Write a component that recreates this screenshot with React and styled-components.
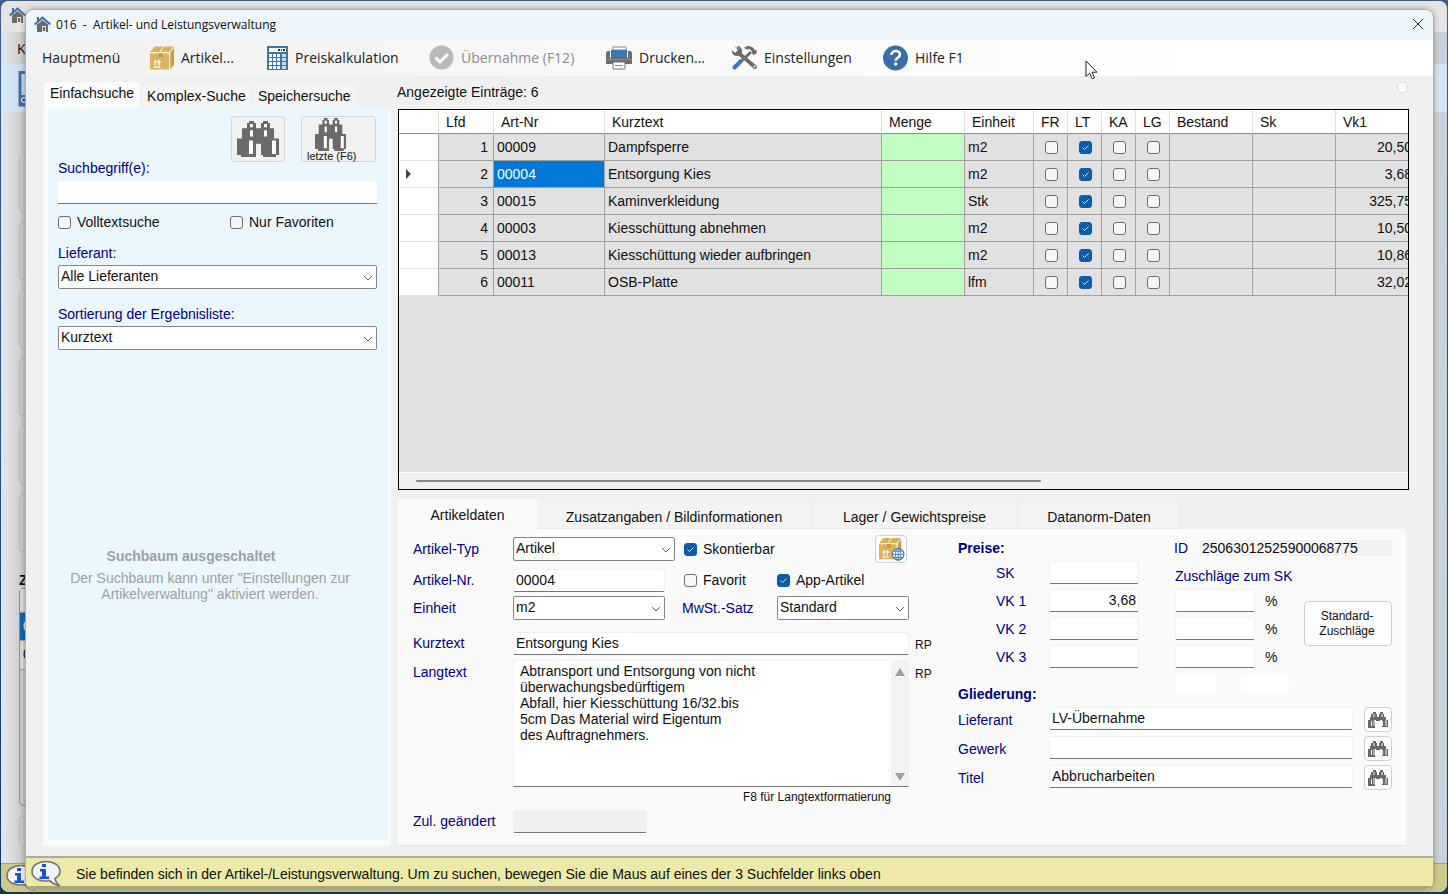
import React from "react";
import styled, { createGlobalStyle } from "styled-components";

const GlobalStyle = createGlobalStyle`
  * { box-sizing: border-box; }
  body {
    margin: 0;
    font-family: "Liberation Sans", Arial, sans-serif;
    font-size: 14px;
    color: #101010;
  }
  button, input, select, textarea { font: inherit; color: inherit; margin: 0; }
`;

const chevron = `url("data:image/svg+xml,%3Csvg xmlns='http://www.w3.org/2000/svg' width='10' height='6'%3E%3Cpath d='M1 1l4 4 4-4' fill='none' stroke='%23666'/%3E%3C/svg%3E")`;
const tick = `url("data:image/svg+xml,%3Csvg xmlns='http://www.w3.org/2000/svg' width='11' height='11'%3E%3Cpath d='M2.5 5.5l2 2 4-4' fill='none' stroke='%23d5e8fa'/%3E%3C/svg%3E")`;

const uiFont = `"Open Sans", "Noto Sans", sans-serif`;

/* ---------- windows ---------- */

const Desktop = styled.div`
  position: relative;
  min-height: 100vh;
  overflow: hidden;
  background: linear-gradient(#3d5f88, #1d4f7d 60%, #0f3a5e);
`;
const RearWindow = styled.div`
  position: absolute;
  inset: 1px 1px 2px 1px;
  display: flex;
  flex-direction: column;
  overflow: hidden;
  border-radius: 8px;
  background: linear-gradient(90deg, #dde6f0 0, #dde6f0 4px, #dedcdc 10px, #c4c4c4 25px, #cfcfcf 99%, #c6d3e0 100%);
`;
const RearTitle = styled.div`
  height: 31px;
  padding: 6px 0 0 8px;
  background: #e6e3e3;
`;
const RearMenu = styled.div`
  height: 32px;
  padding: 7px 0 0 16px;
  font-family: ${uiFont};
`;
const RearTool = styled.div`
  height: 48px;
  padding: 7px 0 0 17px;
  background: linear-gradient(90deg, #dcebf8, #c7d6e4 25px, #d5e4f2);
`;
const RearBody = styled.div`
  flex: 1;
  display: flex;
  flex-direction: column;
  justify-content: flex-end;
  width: 80px;
  padding: 0 0 16px 18px;
  font-weight: bold;
`;
const RearGroup = styled.div`
  height: ${(p) => p.$h}px;
  margin-bottom: ${(p) => p.$gap || 10}px;
  border: 1px solid #b5b5b5;
  border-radius: 4px;
`;
const RearList = styled.div`
  height: 218px;
  margin: 0 0 10px;
  border: 1px solid #8d8d8d;
  font-weight: normal;
`;
const RearItem = styled.div`
  height: ${(p) => p.$h}px;
  padding: 5px 0 0 3px;
  border-bottom: 1px solid #999;
  color: ${(p) => (p.$active ? "#fff" : "#111")};
  background: ${(p) => (p.$active ? "#0b67b5" : "#dadada")};
`;
const RearStatus = styled.div`
  height: 29px;
  padding-left: 5px;
  border-top: 1px solid #a39f86;
  background: #cfca8c;
`;

const Window = styled.div`
  position: relative;
  display: flex;
  flex-direction: column;
  min-height: calc(100vh - 15px);
  margin: 10px 15px 5px 26px;
  overflow: hidden;
  border-radius: 8px;
  background: #f0f0f0;
  box-shadow: 0 0 0 1px #a9adb3, 0 0 6px rgba(0, 0, 0, 0.4);
`;
const TitleBar = styled.header`
  display: flex;
  align-items: center;
  height: 30px;
  padding: 0 8px 2px;
  background: #eef5fb;
  font-family: ${uiFont};
  font-size: 12px;
  white-space: pre;
`;
const Title = styled.h1`
  flex: 1;
  margin: 0 0 0 5px;
  font-size: 12px;
  font-weight: normal;
`;
const CloseButton = styled.button`
  display: flex;
  padding: 1px;
  border: none;
  background: none;
`;

/* ---------- toolbar ---------- */

const Toolbar = styled.nav`
  display: grid;
  grid-template-columns: 107px 117px 163px 177px 125px 152px auto;
  justify-content: start;
  align-items: center;
  height: 36px;
  padding: 0 0 1px 16px;
  background: linear-gradient(90deg, #f1f1f1, #f8f8f8 40%, #fff 85%);
`;
const ToolButton = styled.button`
  display: flex;
  align-items: center;
  gap: 6px;
  padding: 0;
  border: none;
  background: none;
  color: ${(p) => (p.disabled ? "#8c8c8c" : "#222")};
  font-family: ${uiFont};
  font-size: 14px;
  white-space: nowrap;
`;

/* ---------- layout ---------- */

const Main = styled.main`
  flex: 1;
  display: flex;
  gap: 6px;
  padding: 0 24px 10px 17px;
`;
const Sidebar = styled.aside`
  flex: none;
  display: flex;
  flex-direction: column;
  width: 348px;
  padding-top: 6px;
`;
const SearchTabs = styled.div`
  display: flex;
  align-items: flex-end;
  gap: 2px;
  height: 26px;
  padding-left: 1px;
`;
const SearchTab = styled.button`
  height: ${(p) => (p.$active ? 26 : 22)}px;
  padding: ${(p) => (p.$active ? "0 6px 4px" : "0 5px 3px")};
  border: none;
  background: ${(p) => (p.$active ? "#fbfbfb" : "#f4f4f4")};
`;
const SearchPanel = styled.section`
  flex: 1;
  display: flex;
  flex-direction: column;
  padding: 8px 11px 0 10px;
  border: solid #f8fafc;
  border-width: 0 3px 6px 5px;
  background: #eaf7ff;
`;
const SearchButtons = styled.div`
  display: flex;
  justify-content: flex-end;
  gap: 16px;
  height: 44px;
  padding-right: 1px;
`;
const SearchButton = styled.button`
  display: flex;
  flex-direction: column;
  align-items: ${(p) => (p.$wide ? "flex-start" : "center")};
  justify-content: center;
  width: ${(p) => (p.$wide ? 75 : 54)}px;
  height: 46px;
  padding: 0 5px;
  border: 1px solid #d0d6da;
  border-radius: 3px;
  background: #f1f1f1;
  font-size: 11px;
  line-height: 10px;
  svg { margin-left: ${(p) => (p.$wide ? 8 : 0)}px; }
`;
const Label = styled.label`
  color: #000080;
  line-height: 16px;
  white-space: nowrap;
`;
const TopLabel = styled(Label)`
  padding-top: 4px;
`;
const TermInput = styled.input`
  height: 23px;
  margin-top: 5px;
  padding: 0 2px;
  border: none;
  border-bottom: 1px solid #767676;
  outline: none;
  background: #fff;
`;
const CheckRow = styled.div`
  display: grid;
  grid-template-columns: 172px 1fr;
  align-items: center;
  height: 16px;
  margin: 10px 0 15px;
`;
const Field = styled.div`
  display: flex;
  flex-direction: column;
  gap: 4px;
  margin-bottom: 17px;
`;
const Notice = styled.div`
  margin: 181px 15px 0 0;
  color: #9ba1a5;
  line-height: 16px;
  text-align: center;
  p { margin: 6px 0 0; }
  strong { display: block; padding-right: 38px; }
`;

const Content = styled.div`
  flex: 1;
  min-width: 0;
  display: flex;
  flex-direction: column;
`;
const ListHeader = styled.div`
  display: flex;
  justify-content: space-between;
  height: 33px;
  padding: 8px 1px 0 0;
  line-height: 16px;
`;
const Dot = styled.span`
  width: 11px;
  height: 11px;
  margin: -2px 0 0;
  border: 1px solid #ddd;
  border-radius: 4px;
  background: #fafafa;
`;

/* ---------- controls ---------- */

const Input = styled.input`
  flex: ${(p) => (p.$w ? "none" : 1)};
  min-width: 0;
  width: ${(p) => (p.$w ? p.$w + "px" : "auto")};
  height: 23px;
  padding: 0 2px 1px;
  border: 1px solid #f0f0f0;
  border-bottom-color: #767676;
  border-radius: 2px;
  outline: none;
  background: ${(p) => (p.readOnly ? "#f0f0f0" : "#fff")};
  text-align: ${(p) => (p.$right ? "right" : "left")};
`;
const Select = styled.select`
  width: ${(p) => (p.$w ? p.$w + "px" : "100%")};
  height: 24px;
  padding: 0 20px 2px 2px;
  border: 1px solid #858585;
  border-radius: 2px;
  appearance: none;
  background: #fff ${chevron} no-repeat right 3px top 9px;
`;
const Check = styled.input.attrs({ type: "checkbox" })`
  flex: none;
  display: block;
  width: 13px;
  height: 13px;
  appearance: none;
  border: 1px solid #6e6e6e;
  border-radius: 3px;
  background: #f6f6f6;
  &:checked {
    border-color: #0a5cad;
    background: #0a5cad ${tick} center no-repeat;
  }
`;
const CheckLabel = styled.label`
  display: flex;
  align-items: center;
  gap: 6px;
  line-height: 16px;
  white-space: nowrap;
`;
const IconButton = styled.button`
  flex: none;
  display: flex;
  align-items: center;
  justify-content: center;
  width: ${(p) => p.$w}px;
  height: ${(p) => p.$h}px;
  padding: 0;
  border: 1px solid #d0d0d0;
  border-radius: 4px;
  background: #fdfdfd;
`;

/* ---------- article table ---------- */

const GridBox = styled.div`
  flex: 1;
  display: flex;
  flex-direction: column;
  min-height: 240px;
  margin-left: 1px;
  overflow: hidden;
  border: 1px solid #000;
  background: #e1e1e1;
`;
const GridBody = styled.div`
  flex: 1;
  overflow: hidden;
`;
const Table = styled.table`
  width: 1020px;
  min-width: 100%;
  table-layout: fixed;
  border-spacing: 0;
`;
const Th = styled.th`
  height: 24px;
  padding: 0 0 0 7px;
  border-right: 1px solid #e0e0e0;
  border-bottom: 1px solid #8c8c8c;
  background: #fff;
  font-weight: normal;
  text-align: left;
  white-space: nowrap;
`;
const Td = styled.td`
  height: 27px;
  padding: 0 ${(p) => (p.$flag ? 2 : p.$money ? 6 : 5)}px 0 3px;
  border-right: 1px solid #a0a0a0;
  border-bottom: 1px solid ${(p) => (p.$head ? "#e0e0e0" : "#a0a0a0")};
  background: ${(p) =>
    p.$head ? "#fff" : p.$selected ? "#0078d7" : p.$amount ? "#c0ffc0" : "#e1e1e1"};
  color: ${(p) => (p.$selected ? "#fff" : "inherit")};
  text-align: ${(p) => (p.$right ? "right" : "left")};
  white-space: nowrap;
  input { margin: 0 auto; }
  svg { display: block; }
`;
const ScrollTrack = styled.div`
  height: 17px;
  padding: 7px 0 0 17px;
  border-top: 1px solid #fff;
  background: #f0f0f0;
`;
const ScrollThumb = styled.div`
  width: 63%;
  height: 2px;
  border-radius: 1px;
  background: #868686;
`;

/* ---------- detail form ---------- */

const DetailTabs = styled.div`
  display: flex;
  align-items: flex-end;
  height: 30px;
  margin: 9px 0 0 1px;
`;
const DetailTab = styled.button`
  width: ${(p) => p.$w}px;
  height: ${(p) => (p.$active ? 30 : 27)}px;
  padding: ${(p) => (p.$active ? 2 : 4)}px 0 0;
  border: solid #e6e6e6;
  border-width: ${(p) => (p.$active ? "0" : "0 1px 1px 0")};
  background: ${(p) => (p.$active ? "#fafafa" : "#f3f3f3")};
  white-space: nowrap;
`;
const DetailPanel = styled.section`
  display: flex;
  margin: 0 3px 0 1px;
  padding: 6px 14px 12px 15px;
  border-bottom: 1px solid #e8e8e8;
  background: #fafafa;
`;
const ArticleForm = styled.div`
  flex: none;
  width: 545px;
`;
const Row = styled.div`
  display: grid;
  grid-template-columns: ${(p) => p.$cols || "100px auto 1fr"};
  align-items: ${(p) => p.$align || "center"};
  min-height: ${(p) => p.$h || 24}px;
  margin-bottom: ${(p) => p.$gap}px;
`;
const LongText = styled.div`
  display: flex;
  width: 396px;
  height: 127px;
  border: 1px solid #f0f0f0;
  border-bottom-color: #767676;
  background: #fff;
`;
const TextArea = styled.textarea`
  flex: 1;
  padding: 2px 6px;
  border: none;
  outline: none;
  resize: none;
  overflow: hidden;
  background: transparent;
  line-height: 16px;
`;
const ScrollArrows = styled.div`
  display: flex;
  flex-direction: column;
  justify-content: space-between;
  align-items: center;
  width: 17px;
  padding: 7px 0 5px;
  background: #f3f3f3;
`;
const Small = styled.span`
  padding: ${(p) => p.$p || "4px 0 0 6px"};
  font-size: 12px;
  line-height: 16px;
`;
const Percent = styled.span`
  padding-left: 6px;
  line-height: 16px;
`;
const Hint = styled.div`
  width: 478px;
  height: 19px;
  font-size: 12px;
  line-height: 14px;
  text-align: right;
`;
const PriceForm = styled.div`
  flex: 1;
  min-width: 434px;
`;
const Heading = styled.h2`
  margin: 0;
  color: #000080;
  font-size: 14px;
  line-height: 16px;
`;
const Output = styled.output`
  padding-left: 2px;
  background: #f2f2f2;
  line-height: 16px;
`;
const Prices = styled.div`
  display: flex;
  height: 115px;
`;
const PriceGrid = styled.div`
  display: grid;
  grid-template-columns: ${(p) => p.$cols};
  grid-auto-rows: 23px;
  align-content: start;
  align-items: center;
  gap: 5px 0;
  margin-right: ${(p) => p.$mr}px;
`;
const PriceLabel = styled(Label)`
  padding-left: 38px;
`;
const SurchargeTitle = styled(Label)`
  grid-column: 1 / -1;
  padding-top: 7px;
`;
const SurchargeButton = styled.button`
  width: 88px;
  height: 45px;
  margin: 40px 0 0 auto;
  padding: 0 2px 0 0;
  border: 1px solid #cfcfcf;
  border-radius: 4px;
  background: #fdfdfd;
  font-size: 12px;
  line-height: 15px;
`;
const GroupRow = styled.div`
  display: grid;
  grid-template-columns: 218px 65px 1fr;
  height: 26px;
  margin-bottom: 5px;
  h2 { align-self: end; }
`;
const Blank = styled.span`
  width: ${(p) => p.$w}px;
  height: 16px;
  background: #fff;
`;
const GroupAction = styled.div`
  display: flex;
  justify-content: flex-end;
`;
const StatusBar = styled.footer`
  display: flex;
  align-items: center;
  gap: 14px;
  height: 33px;
  padding: 3px 5px 0;
  border-top: 2px solid #ababa5;
  border-bottom: 3px solid #aaa577;
  background: #ece9a9;
`;
const Cursor = styled.svg`
  position: absolute;
  left: 1059px;
  top: 50px;
`;

/* ---------- icons ---------- */

const HouseIcon = () => (
  <svg width="17" height="16" viewBox="0 0 17 16">
    <path d="M3 8.500L8.500 4 14 8.500V16H3z" fill="#6b6b6b" />
    <path d="M8 10h4v6H8z" fill="#e8edf2" />
    <path d="M8.800 11h2.400v4H8.800z" fill="#6b6b6b" />
    <path d="M.7 8.500L8.500 1.500 16.300 8.500" fill="none" stroke="#3b6ea5" strokeWidth="2" />
    <path d="M3 1h2v4L3 6.500z" fill="#3b6ea5" />
  </svg>
);

const CrateShape = () => (
  <g>
    <path d="M1 7l5-6h20l-5 6z" fill="#d9b15a" />
    <path d="M1 8h20v17H1z" fill="#dcb35c" />
    <path d="M22 7.500l4-5.500v18l-4 5z" fill="#c89c40" />
    <path d="M1 7.500h20.500L26 1.500M21.500 7.500V25M11 7.500L15 1" fill="none" stroke="#fff6dc" />
    <path d="M10 8h4v5l-2-1.500-2 1.500z" fill="#c2953a" />
    <path d="M6.500 21v-5M10.500 21v-5M5 17.500l1.500-2 1.500 2M9 17.500l1.500-2 1.500 2M5 22.500h7" fill="none" stroke="#fff" strokeWidth="1.200" />
  </g>
);

const BoxIcon = () => (
  <svg width="26" height="26" viewBox="0 0 27 26">
    <CrateShape />
  </svg>
);

const BoxGlobeIcon = () => (
  <svg width="27" height="24" viewBox="0 0 30 27">
    <CrateShape />
    <circle cx="22.500" cy="19.500" r="6.500" fill="#fff" stroke="#3a74b8" strokeWidth="1.200" />
    <path d="M16 19.500h13M22.500 13v13M17.500 16h10M17.500 23h10" stroke="#3a74b8" fill="none" />
    <ellipse cx="22.500" cy="19.500" rx="3" ry="6.500" fill="none" stroke="#3a74b8" />
  </svg>
);

const CalcIcon = () => (
  <svg width="23" height="24" viewBox="0 0 23 24">
    <rect x="1" y="0" width="21" height="24" fill="#3f75ad" />
    <rect x="3" y="2" width="17" height="4" fill="#fff" />
    <path d="M12 3h2v2h-2zM15 3h1v2h-1zM17 3h2v2h-2z" fill="#333" />
    {[8, 12, 16, 20].map((y) =>
      [3, 7, 11, 16].map((x) => (
        <rect key={x + "-" + y} x={x} y={y} width={x === 16 ? 4 : 3} height="3" fill={x === 16 ? "#c9dcef" : "#fff"} />
      ))
    )}
  </svg>
);

const CheckCircleIcon = () => (
  <svg width="26" height="26" viewBox="0 0 26 26">
    <circle cx="12.500" cy="12.500" r="12" fill="#b9b9b9" />
    <path d="M6.500 12.500l4.500 4.500L19 9" fill="none" stroke="#fff" strokeWidth="3" />
  </svg>
);

const PrinterIcon = () => (
  <svg width="27" height="24" viewBox="0 0 27 24">
    <path d="M1 5h3v7h18V5h3l1 2v11H0V7z" fill="#6d6d6d" />
    <path d="M7 1h13v3H7z" fill="#fff" stroke="#888" />
    <path d="M5 4h16v8H5z" fill="#3b76b8" />
    <path d="M0 13.500h26" stroke="#8b8b8b" />
    <path d="M7 16h12v7H7z" fill="#fff" stroke="#777" />
    <path d="M9 19.500h8" stroke="#888" />
  </svg>
);

const ToolsIcon = () => (
  <svg width="27" height="25" viewBox="0 0 27 25">
    <path d="M7 7.500L24 22" stroke="#6c6c6c" strokeWidth="4" strokeLinecap="round" />
    <path d="M3 1l4 4-1.500 3L2 6.500.8 4.500C.5 7.500 2 11 6 11c3 0 5.500-2.500 5-6C10.500 2.500 8 .5 5.500 1l2.500 3z" fill="#6c6c6c" />
    <circle cx="23.500" cy="21.500" r="1" fill="#fff" />
    <path d="M20 7L11 15.500" stroke="#6c6c6c" strokeWidth="3" />
    <path d="M13 3c3-3 7-2.500 9.500 0l1 2 2.500.5-.5 3-3 1.500-1.500-1.500v-2L18.500 4 16 4.500z" fill="#6c6c6c" />
    <path d="M10 16L3.500 22.500" stroke="#3b76b8" strokeWidth="4" strokeLinecap="round" />
  </svg>
);

const HelpIcon = () => (
  <svg width="26" height="26" viewBox="0 0 26 26">
    <circle cx="12.500" cy="13" r="12.500" fill="#356ea8" />
    <path d="M8.500 10c0-5.500 8.500-5 8.500-.5 0 3-4.300 3-4.300 6.300" fill="none" stroke="#fff" strokeWidth="2.600" />
    <circle cx="12.700" cy="19" r="1.700" fill="#fff" />
  </svg>
);

const BinocularsIcon = ({ width, height }) => (
  <svg width={width} height={height} viewBox="0 0 42 35" preserveAspectRatio="none">
    <path
      d="M12 0h5v2h2v5h5V2h2V0h5v2h2v5h4v10h5v16h-3v2H26v-2h-2V22h-5v13H4v-2H0V17h5V7h5V2h2z"
      fill="#6a6a6a"
    />
    <path d="M13 3h3v3h-3zM27 3h3v3h-3zM13 9h3v6h-3zM27 9h3v6h-3zM12 19h4v13h-4zM35 19h4v13h-4z" fill="#fff" />
  </svg>
);

/* narrow barrels, legible at 20px */
const SmallBinocularsIcon = () => (
  <svg width="20" height="17" viewBox="0 0 20 17">
    <path d="M5 1h3v2h1v3h2V3h1V1h3v2h1v3h2v3h2v7h-6V9H7v8H0V9h2V6h1V3h2z" fill="#686868" />
    <path d="M8 6h4v4H8z" fill="#686868" />
    <path d="M3 10h1v5H3zM5.500 9h1v6h-1zM14 10h1v5h-1zM17.500 9h1v6h-1zM5.500 3h1v3h-1zM13.500 3h1v3h-1z" fill="#f4f4f4" />
  </svg>
);

const InfoIcon = () => (
  <svg width="31" height="28" viewBox="0 0 31 28">
    <path d="M15 1.500C7 1.500 1 5.500 1 11.500s6 9.500 13 9.500c1.500 0 3-.2 4.500-.6C21 23 25 25 29 26c-3-2-4.500-4.500-5-7.500 3-1.700 5-4 5-7C29 5.500 23 1.500 15 1.500z" fill="#f2f2fa" stroke="#77756f" strokeWidth="1.600" />
    <path d="M11 4h4v3h-4zM9 9h6v7.500h3V19H8.500v-2.500H11v-5H9z" fill="#1553d8" />
  </svg>
);

/* ---------- data ---------- */

const columns = [
  ["", 40], ["Lfd", 55], ["Art-Nr", 111], ["Kurztext", 277], ["Menge", 83],
  ["Einheit", 69], ["FR", 34], ["LT", 34], ["KA", 34], ["LG", 34],
  ["Bestand", 83], ["Sk", 83], ["Vk1", 83],
];

const articles = [
  { nr: "00009", text: "Dampfsperre", unit: "m2", vk: "20,50" },
  { nr: "00004", text: "Entsorgung Kies", unit: "m2", vk: "3,68" },
  { nr: "00015", text: "Kaminverkleidung", unit: "Stk", vk: "325,75" },
  { nr: "00003", text: "Kiesschüttung abnehmen", unit: "m2", vk: "10,50" },
  { nr: "00013", text: "Kiesschüttung wieder aufbringen", unit: "m2", vk: "10,86" },
  { nr: "00011", text: "OSB-Platte", unit: "lfm", vk: "32,02" },
];

const longText = `Abtransport und Entsorgung von nicht
überwachungsbedürftigem
Abfall, hier Kiesschüttung 16/32.bis
5cm Das Material wird Eigentum
des Auftragnehmers.`;

const groups = [
  ["Lieferant", "LV-Übernahme"],
  ["Gewerk", ""],
  ["Titel", "Abbrucharbeiten"],
];

/* ---------- parts ---------- */

function Background() {
  return (
    <RearWindow aria-hidden="true">
      <RearTitle><HouseIcon /></RearTitle>
      <RearMenu>K</RearMenu>
      <RearTool>
        <svg width="20" height="36" viewBox="0 0 20 36">
          <path d="M20 1.500H2V34h18" fill="none" stroke="#3a6ea5" strokeWidth="3" />
          <path d="M2 24h18v11H2z" fill="#3a6ea5" />
          <circle cx="6" cy="29" r="2.500" fill="none" stroke="#fff" />
        </svg>
      </RearTool>
      <RearBody>
        <RearGroup $h={58} />
        <RearGroup $h={58} />
        <RearGroup $h={58} />
        <RearGroup $h={58} />
        <RearGroup $h={58} />
        <RearGroup $h={58} $gap={20} />
        <div>Z</div>
        <RearGroup as={RearList}>
          <RearItem $h={24} />
          <RearItem $h={28} $active>0</RearItem>
          <RearItem $h={29}>0</RearItem>
        </RearGroup>
        <RearGroup $h={30} $gap={1} />
      </RearBody>
      <RearStatus><InfoIcon /></RearStatus>
    </RearWindow>
  );
}

function Search() {
  return (
    <Sidebar>
      <SearchTabs>
        <SearchTab $active>Einfachsuche</SearchTab>
        <SearchTab>Komplex-Suche</SearchTab>
        <SearchTab>Speichersuche</SearchTab>
      </SearchTabs>
      <SearchPanel>
        <SearchButtons>
          <SearchButton aria-label="Suchen"><BinocularsIcon width={42} height={36} /></SearchButton>
          <SearchButton $wide>
            <BinocularsIcon width={31} height={33} />
            letzte (F6)
          </SearchButton>
        </SearchButtons>
        <Label htmlFor="term">Suchbegriff(e):</Label>
        <TermInput id="term" />
        <CheckRow>
          <CheckLabel><Check />Volltextsuche</CheckLabel>
          <CheckLabel><Check />Nur Favoriten</CheckLabel>
        </CheckRow>
        <Field>
          <Label htmlFor="supplier">Lieferant:</Label>
          <Select id="supplier"><option>Alle Lieferanten</option></Select>
        </Field>
        <Field>
          <Label htmlFor="sort">Sortierung der Ergebnisliste:</Label>
          <Select id="sort"><option>Kurztext</option></Select>
        </Field>
        <Notice>
          <strong>Suchbaum ausgeschaltet</strong>
          <p>
            Der Suchbaum kann unter "Einstellungen zur<br />
            Artikelverwaltung" aktiviert werden.
          </p>
        </Notice>
      </SearchPanel>
    </Sidebar>
  );
}

function ArticleTable() {
  return (
    <GridBox>
      <GridBody>
        <Table>
          <colgroup>
            {columns.map(([name, width]) => <col key={name} width={width} />)}
          </colgroup>
          <thead>
            <tr>{columns.map(([name]) => <Th key={name}>{name}</Th>)}</tr>
          </thead>
          <tbody>
            {articles.map((a, i) => (
              <tr key={a.nr}>
                <Td $head>
                  {i === 1 && <svg width="10" height="10"><path d="M4 0l5 5-5 5z" fill="#444" /></svg>}
                </Td>
                <Td $right>{i + 1}</Td>
                <Td $selected={i === 1}>{a.nr}</Td>
                <Td>{a.text}</Td>
                <Td $amount />
                <Td>{a.unit}</Td>
                {["FR", "LT", "KA", "LG"].map((flag) => (
                  <Td key={flag} $flag><Check aria-label={flag} defaultChecked={flag === "LT"} /></Td>
                ))}
                <Td />
                <Td />
                <Td $right $money>{a.vk}</Td>
              </tr>
            ))}
          </tbody>
        </Table>
      </GridBody>
      <ScrollTrack><ScrollThumb /></ScrollTrack>
    </GridBox>
  );
}

function ArticleData() {
  return (
    <ArticleForm>
      <Row $h={28} $gap={5} $cols="100px 171px 191px auto">
        <Label htmlFor="type">Artikel-Typ</Label>
        <Select id="type" $w={162}><option>Artikel</option></Select>
        <CheckLabel><Check defaultChecked />Skontierbar</CheckLabel>
        <IconButton $w={32} $h={28} aria-label="Webshop"><BoxGlobeIcon /></IconButton>
      </Row>
      <Row $gap={4} $cols="100px 171px 93px auto">
        <Label htmlFor="number">Artikel-Nr.</Label>
        <Input id="number" $w={152} defaultValue="00004" />
        <CheckLabel><Check />Favorit</CheckLabel>
        <CheckLabel><Check defaultChecked />App-Artikel</CheckLabel>
      </Row>
      <Row $gap={11} $cols="100px 169px 95px auto">
        <Label htmlFor="unit">Einheit</Label>
        <Select id="unit" $w={152}><option>m2</option></Select>
        <Label htmlFor="vat">MwSt.-Satz</Label>
        <Select id="vat" $w={132}><option>Standard</option></Select>
      </Row>
      <Row $gap={5}>
        <Label htmlFor="short">Kurztext</Label>
        <Input id="short" $w={396} defaultValue="Entsorgung Kies" />
        <Small>RP</Small>
      </Row>
      <Row $gap={3} $align="start">
        <TopLabel htmlFor="long">Langtext</TopLabel>
        <LongText>
          <TextArea id="long" defaultValue={longText} />
          <ScrollArrows>
            <svg width="10" height="8"><path d="M5 0l5 8H0z" fill="#a0a0a0" /></svg>
            <svg width="10" height="8"><path d="M5 8l5-8H0z" fill="#a0a0a0" /></svg>
          </ScrollArrows>
        </LongText>
        <Small $p="6px 0 0 6px">RP</Small>
      </Row>
      <Hint>F8 für Langtextformatierung</Hint>
      <Row $gap={0}>
        <Label htmlFor="changed">Zul. geändert</Label>
        <Input id="changed" $w={134} readOnly />
      </Row>
    </ArticleForm>
  );
}

function PriceData() {
  return (
    <PriceForm>
      <Row $h={26} $gap={0} $cols="216px 26px 1fr">
        <Heading>Preise:</Heading>
        <Label htmlFor="id">ID</Label>
        <Output id="id">25063012525900068775</Output>
      </Row>
      <Prices>
        <PriceGrid $cols="91px 90px" $mr={36}>
          {["SK", "VK 1", "VK 2", "VK 3"].map((name) => (
            <React.Fragment key={name}>
              <PriceLabel htmlFor={name}>{name}</PriceLabel>
              <Input id={name} $w={90} $right defaultValue={name === "VK 1" ? "3,68" : ""} />
            </React.Fragment>
          ))}
        </PriceGrid>
        <PriceGrid $cols="84px auto" $mr={0}>
          <SurchargeTitle as="span">Zuschläge zum SK</SurchargeTitle>
          {[1, 2, 3].map((n) => (
            <React.Fragment key={n}>
              <Input $w={80} aria-label={"Zuschlag VK " + n} />
              <Percent>%</Percent>
            </React.Fragment>
          ))}
        </PriceGrid>
        <SurchargeButton>Standard-<br />Zuschläge</SurchargeButton>
      </Prices>
      <GroupRow>
        <Heading>Gliederung:</Heading>
        <Blank $w={40} />
        <Blank $w={48} />
      </GroupRow>
      {groups.map(([name, value]) => (
        <Row key={name} $gap={4} $h={25} $align="end" $cols="91px 1fr 39px">
          <GroupLabel htmlFor={"g" + name}>{name}</GroupLabel>
          <GroupInput id={"g" + name} defaultValue={value} />
          <GroupAction>
            <IconButton $w={28} $h={25} aria-label={name + " suchen"}>
              <SmallBinocularsIcon />
            </IconButton>
          </GroupAction>
        </Row>
      ))}
    </PriceForm>
  );
}

const GroupLabel = styled(Label)`
  align-self: center;
`;
const GroupInput = styled(Input)`
  align-self: start;
`;

export default function App() {
  return (
    <Desktop>
      <GlobalStyle />
      <Background />
      <Window>
        <TitleBar>
          <HouseIcon />
          <Title>016  -  Artikel- und Leistungsverwaltung</Title>
          <CloseButton aria-label="Schließen">
            <svg width="12" height="12"><path d="M1 1l10 10M11 1L1 11" stroke="#222" /></svg>
          </CloseButton>
        </TitleBar>
        <Toolbar>
          <ToolButton>Hauptmenü</ToolButton>
          <ToolButton><BoxIcon />Artikel...</ToolButton>
          <ToolButton><CalcIcon />Preiskalkulation</ToolButton>
          <ToolButton disabled><CheckCircleIcon />Übernahme (F12)</ToolButton>
          <ToolButton><PrinterIcon />Drucken...</ToolButton>
          <ToolButton><ToolsIcon />Einstellungen</ToolButton>
          <ToolButton><HelpIcon />Hilfe F1</ToolButton>
        </Toolbar>
        <Main>
          <Search />
          <Content>
            <ListHeader>
              Angezeigte Einträge: 6
              <Dot />
            </ListHeader>
            <ArticleTable />
            <DetailTabs>
              <DetailTab $w={139} $active>Artikeldaten</DetailTab>
              <DetailTab $w={275}>Zusatzangaben / Bildinformationen</DetailTab>
              <DetailTab $w={206}>Lager / Gewichtspreise</DetailTab>
              <DetailTab $w={163}>Datanorm-Daten</DetailTab>
            </DetailTabs>
            <DetailPanel>
              <ArticleData />
              <PriceData />
            </DetailPanel>
          </Content>
        </Main>
        <StatusBar>
          <InfoIcon />
          Sie befinden sich in der Artikel-/Leistungsverwaltung. Um zu suchen, bewegen Sie die Maus auf eines der 3 Suchfelder links oben
        </StatusBar>
        <Cursor width="14" height="21" viewBox="0 0 14 21">
          <path d="M1 1v15.500l3.600-3.400 2.600 5.700 2.300-1-2.500-5.600H12z" fill="#fff" stroke="#222" />
        </Cursor>
      </Window>
    </Desktop>
  );
}
